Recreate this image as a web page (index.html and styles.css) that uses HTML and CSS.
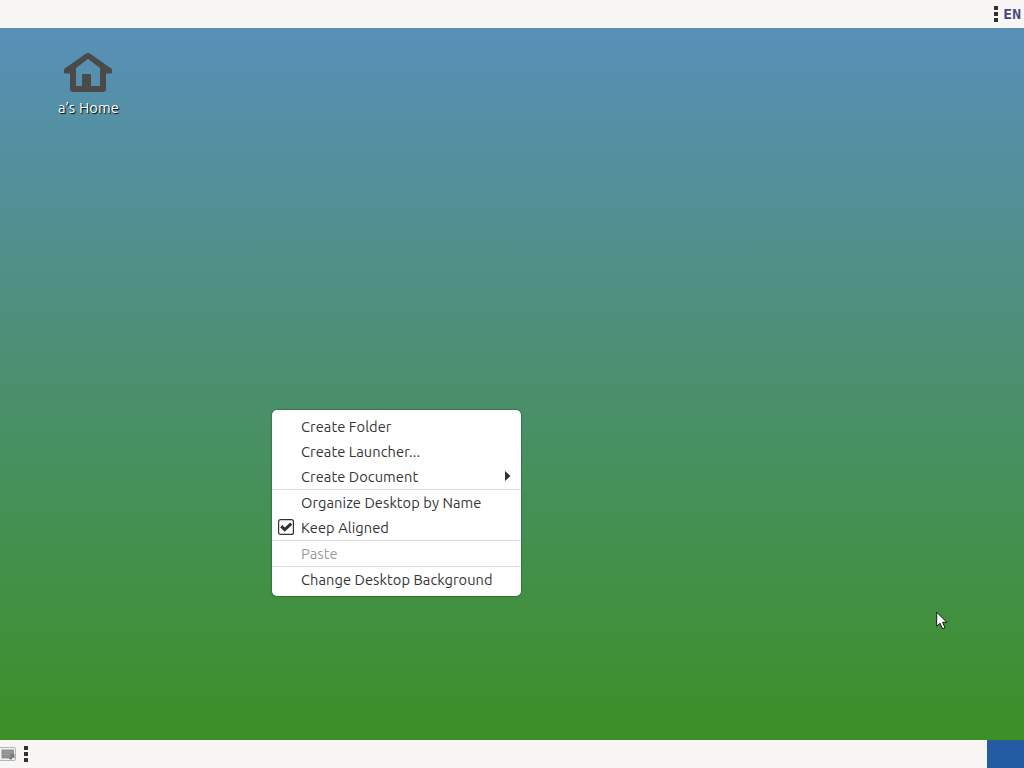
FILE: index.html
```html
<!DOCTYPE html>
<html lang="en">
<head>
    <meta charset="UTF-8">
    <meta name="viewport" content="width=device-width, initial-scale=1.0">
    <title>Desktop</title>
    <link rel="stylesheet" href="styles.css">
</head>
<body>
    <div class="panel panel-top">
        <div class="grip"><i></i><i></i><i></i></div>
        <span class="lang">EN</span>
    </div>

    <div class="desktop">
        <div class="desktop-icon">
            <svg width="48" height="40" viewBox="0 0 48 40">
                <path fill="#4a4a4a" fill-rule="evenodd" d="M24 0 Q25.5 0 27 1.2 L47.2 15.500 Q48 16.200 48 17.500 V20.500 H42 V36 Q42 39 39 39 H9 Q6 39 6 36 V20.500 H0 V17.500 Q0 16.200 .8 15.500 L21 1.200 Q22.500 0 24 0 Z M24 6 L12 15 V33 H18 V22 Q18 21 19 21 H26 Q27 21 27 22 V33 H36 V15 Z"/>
            </svg>
            <span class="icon-label">a’s Home</span>
        </div>

        <!-- Context menu -->
        <div class="menu">
            <div class="menu-item"><span>Create Folder</span></div>
            <div class="menu-item"><span>Create Launcher...</span></div>
            <div class="menu-item">
                <span>Create Document</span>
                <svg class="arrow" width="6" height="10" viewBox="0 0 6 10"><path fill="#303030" d="M0 0 L5.500 5 L0 10 Z"/></svg>
            </div>
            <div class="separator"></div>
            <div class="menu-item"><span>Organize Desktop by Name</span></div>
            <div class="menu-item">
                <svg class="check" width="16" height="16" viewBox="0 0 16 16">
                    <rect x=".6" y=".6" width="14.800" height="14.800" rx="2" fill="#fff" stroke="#303036" stroke-width="1.200"/>
                    <path d="M3.200 7.200 L6.700 10.600 L13.200 4.600" fill="none" stroke="#303036" stroke-width="3"/>
                </svg>
                <span>Keep Aligned</span>
            </div>
            <div class="separator"></div>
            <div class="menu-item disabled"><span>Paste</span></div>
            <div class="separator"></div>
            <div class="menu-item"><span>Change Desktop Background</span></div>
        </div>

        <svg class="cursor" width="12" height="20" viewBox="0 0 12 20">
            <path fill="#fff" stroke="#151515" d="M.7 1.200 V15.300 L4 12.200 L6.500 17.800 L9 16.700 L6.600 11.300 H10.800 Z"/>
        </svg>
    </div>

    <div class="panel panel-bottom">
        <svg width="17" height="16" viewBox="0 0 17 16">
            <rect x="-.5" y="1.500" width="16" height="13" rx="1.500" fill="#f3f3f1" stroke="#b4b4b4"/>
            <path fill="#8f8f8f" d="M1.500 3.500 H14 V9 L10 12.500 H1.500 Z"/>
            <path fill="#a2a2a0" d="M3 5.500 H12 V6.500 H3 Z M3 8 H9 V9 H3 Z"/>
            <path fill="#777" d="M10 8 H14.500 V12.500 L13 11.500 L11 14 L9 12.500 L11.500 10 Z"/>
        </svg>
        <div class="grip"><i></i><i></i><i></i></div>
        <div class="workspace"></div>
    </div>
</body>
</html>
```
FILE: styles.css
```css
* {
    margin: 0;
    padding: 0;
    box-sizing: border-box;
}
body {
    width: 1024px;
    height: 768px;
    display: flex;
    flex-direction: column;
    overflow: hidden;
    font-family: Ubuntu, "Noto Sans", sans-serif;
    font-size: 14.67px;
    letter-spacing: 0.06px;
    color: #353537;
}
.panel {
    height: 28px;
    flex: none;
    display: flex;
    align-items: center;
    background: #f7f6f4;
}
.panel-top {
    justify-content: flex-end;
    padding-right: 3px;
    gap: 5px;
}
.grip {
    display: flex;
    flex-direction: column;
    gap: 2px;
}
.grip i {
    width: 4px;
    height: 4px;
    background: #303030;
}
.lang {
    margin-bottom: 2px;
    font-family: "DejaVu Sans Mono", monospace;
    font-size: 14.67px;
    font-weight: bold;
    letter-spacing: 0;
    color: #494681;
}
.desktop {
    flex: 1;
    position: relative;
    background: linear-gradient(#5890b8 0%, #3c9026 100%);
}
.desktop-icon {
    position: absolute;
    left: 38px;
    top: 25px;
    width: 100px;
    display: flex;
    flex-direction: column;
    align-items: center;
    gap: 5px;
}
.icon-label {
    padding-left: 1px;
    line-height: 20px;
    letter-spacing: 0.15px;
    color: #fff;
    text-shadow: 1px 1px 1px #000;
}
.menu {
    position: absolute;
    left: 272px;
    top: 382px;
    width: 249px;
    padding: 4px 0;
    border-radius: 5px;
    background: #fff;
    box-shadow: 0 0 1px 1px rgba(0, 0, 0, 0.2);
}
.menu-item {
    position: relative;
    height: 25px;
    padding: 0 10px 0 29px;
    display: flex;
    align-items: center;
    justify-content: space-between;
    white-space: nowrap;
}
.menu-item.disabled {
    color: #9b9b9b;
}
.arrow {
    margin-bottom: 2px;
}
.separator {
    height: 1px;
    background: #dcdcdf;
}
.check {
    position: absolute;
    left: 6px;
    top: 4px;
}
.cursor {
    position: absolute;
    left: 936px;
    top: 583px;
}
.panel-bottom .grip {
    margin-left: 7px;
}
.workspace {
    width: 37px;
    height: 28px;
    margin-left: auto;
    background: #245ca3;
}
```
